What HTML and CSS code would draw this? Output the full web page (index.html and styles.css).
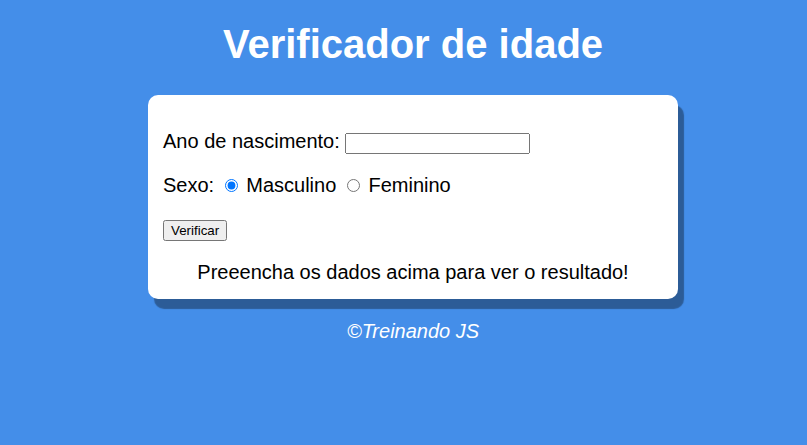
FILE: index.html
```html
<!DOCTYPE html>
<html lang="pt-BR">
<head>
<meta charset="utf-8">
<title>Verificador de idade</title>
<link rel="stylesheet" href="styles.css">
</head>
<body>
<header class="header">
  <h1 class="title">Verificador de idade</h1>
</header>
<main class="card">
  <p class="row">Ano de nascimento: <input type="number" class="year-input" id="ano"></p>
  <p class="row">Sexo: <input type="radio" name="sexo" id="masc" checked> <label for="masc">Masculino</label> <input type="radio" name="sexo" id="fem"> <label for="fem">Feminino</label></p>
  <p class="row"><button type="button" class="btn">Verificar</button></p>
  <div class="result">Preeencha os dados acima para ver o resultado!</div>
</main>
<footer class="footer">&copy;Treinando JS</footer>
</body>
</html>
```
FILE: styles.css
```css
html, body {
  margin: 0;
  padding: 0;
}
body {
  background: #448ee9;
  font-family: "Liberation Sans", Arial, sans-serif;
  font-size: 20px;
  color: #000;
  padding-left: 19px;
}
.title {
  margin: 22px 0 28px;
  text-align: center;
  color: #fff;
  font-size: 40px;
  font-weight: bold;
}
.card {
  display: block;
  width: 500px;
  margin: 0 auto;
  padding: 15px;
  background: #fff;
  border-radius: 10px;
  box-shadow: 6px 10px 1px rgba(0, 0, 0, 0.35);
}
.row {
  margin: 20px 0;
}
.year-input {
  box-sizing: border-box;
  width: 185px;
  height: 21px;
  font: 13.333px "Liberation Sans", Arial, sans-serif;
  -moz-appearance: textfield;
}
.year-input::-webkit-inner-spin-button,
.year-input::-webkit-outer-spin-button {
  -webkit-appearance: none;
  margin: 0;
}
.btn {
  font: 13.333px "Liberation Sans", Arial, sans-serif;
}
.result {
  margin-top: 20px;
  text-align: center;
}
.footer {
  margin-top: 21px;
  text-align: center;
  color: #fff;
  font-style: italic;
}
```
